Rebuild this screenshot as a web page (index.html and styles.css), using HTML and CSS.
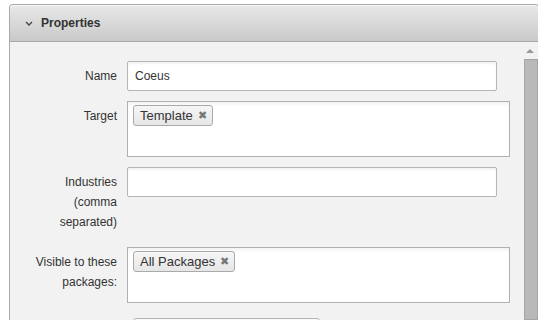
FILE: index.html
```html
<!DOCTYPE html>
<html lang="en">
<head>
    <meta charset="UTF-8">
    <meta name="viewport" content="width=device-width, initial-scale=1.0">
    <title>Properties</title>
    <link rel="stylesheet" href="styles.css">
</head>
<body>
    <div class="panel">
        <div class="panel-head">
            <svg class="chevron" width="8" height="5" viewBox="0 0 8 5">
                <polyline points="1,1 4,4 7,1" fill="none" stroke="#444" stroke-width="1.3"/>
            </svg>
            <span class="panel-title">Properties</span>
        </div>
        <div class="panel-body">
            <form class="props">
                <label class="prop-label" for="name">Name</label>
                <input class="field short" id="name" type="text" value="Coeus">

                <label class="prop-label">Target</label>
                <div class="tag-box">
                    <span class="tag">Template <span class="tag-x">&#x2716;</span></span>
                </div>

                <label class="prop-label" for="industries">Industries<br>(comma<br>separated)</label>
                <div><input class="field short" id="industries" type="text"></div>

                <label class="prop-label">Visible to these<br>packages:</label>
                <div class="tag-box">
                    <span class="tag">All Packages <span class="tag-x">&#x2716;</span></span>
                </div>

                <label class="prop-label"></label>
                <div><div class="select"></div></div>
            </form>
            <div class="scrollbar">
                <span class="arrow"></span>
                <span class="thumb"></span>
            </div>
        </div>
    </div>
</body>
</html>
```

FILE: styles.css
```css
body {
    margin: 0;
    background: #fff;
    font-family: "Liberation Sans", Arial, sans-serif;
    font-size: 12px;
    color: #333;
    overflow: hidden;
    height: 320px;
}
.panel {
    margin: 4px 0 0 9px;
    width: 528px;
    border: 1px solid #a9a9a9;
    border-bottom: none;
    border-radius: 4px 4px 0 0;
    background: #f2f2f2;
}
.panel-head {
    height: 36px;
    display: flex;
    align-items: center;
    padding-left: 15px;
    background: linear-gradient(#e8e8e8, #c9c9c9);
    border-bottom: 1px solid #a9a9a9;
    border-radius: 4px 4px 0 0;
    box-shadow: inset 0 1px 0 #f6f6f6;
}
.chevron {
    margin-right: 8px;
    margin-top: 1px;
}
.panel-title {
    font-weight: bold;
    font-size: 12px;
    color: #333;
}
.panel-body {
    display: flex;
    height: 278px;
    overflow: hidden;
}
.props {
    display: grid;
    grid-template-columns: 107px 383px;
    column-gap: 10px;
    row-gap: 10px;
    align-items: start;
    padding-top: 19px;
}
.prop-label {
    text-align: right;
    line-height: 20px;
    padding: 5px 0;
}
.field {
    box-sizing: border-box;
    height: 30px;
    border: 1px solid #b5b5b5;
    border-radius: 2px;
    padding: 0 7px;
    font-family: inherit;
    font-size: 12px;
    color: #333;
    background: #fff;
    box-shadow: inset 0 2px 2px rgba(0,0,0,0.05);
    display: block;
}
.short {
    width: 370px;
}
.tag-box {
    box-sizing: border-box;
    height: 56px;
    border: 1px solid #b0b0b0;
    background: #fff;
    box-shadow: inset 0 4px 4px -2px rgba(0,0,0,0.06);
    padding: 3px 5px;
}
.tag {
    display: inline-flex;
    align-items: center;
    height: 21px;
    box-sizing: border-box;
    padding: 0 5px 0 6px;
    border: 1px solid #aaa;
    border-radius: 3px;
    background: linear-gradient(#f6f6f6, #e6e6e6);
    color: #333;
    font-size: 13px;
}
.tag-x {
    font-size: 11px;
    color: #777;
    margin-left: 5px;
}
.select {
    margin: 5px 0 0 6px;
    width: 185px;
    height: 26px;
    border: 1px solid #b5b5b5;
    border-radius: 3px;
    background: #fafafa;
}
.scrollbar {
    margin-left: auto;
    width: 16px;
    display: flex;
    flex-direction: column;
    align-items: flex-end;
}
.arrow {
    align-self: center;
    margin-top: 7px;
    width: 0;
    height: 0;
    border-left: 4px solid transparent;
    border-right: 4px solid transparent;
    border-bottom: 4px solid #999;
}
.thumb {
    margin-top: 6px;
    width: 12px;
    flex: 1;
    background: #b9b9b9;
    border: 1px solid #a5a5a5;
}
```
